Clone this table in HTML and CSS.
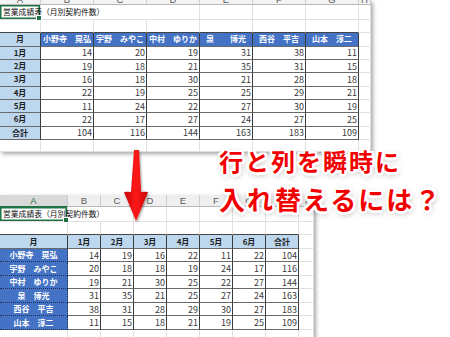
FILE: index.html
```html
<!DOCTYPE html>
<html lang="ja">
<head>
<meta charset="utf-8">
<title>行と列を瞬時に入れ替えるには？</title>
<link rel="stylesheet" href="styles.css">
</head>
<body>
<div class="page">
  <div class="sheet sheet-top">
    <div class="c hd">A</div><div class="c hd">B</div><div class="c hd">C</div><div class="c hd">D</div><div class="c hd">E</div><div class="c hd">F</div><div class="c hd">G</div><div class="c hd">H</div>

    <div class="c sel"><span class="ttl">営業成績表（月別契約件数）</span></div><div class="c sp"></div><div class="c sp"></div><div class="c"></div><div class="c"></div><div class="c"></div><div class="c"></div><div class="c"></div>

    <div class="c ab"></div><div class="c ab"></div><div class="c ab"></div><div class="c ab"></div><div class="c ab"></div><div class="c ab"></div><div class="c ab"></div><div class="c"></div>

    <div class="c t lb">月</div><div class="c t bl">小野寺　晃弘</div><div class="c t bl">宇野　みやこ</div><div class="c t bl">中村　ゆりか</div><div class="c t bl">泉　　博光</div><div class="c t bl">西谷　平吉</div><div class="c t bl">山本　淳二</div><div class="c"></div>

    <div class="c t lb">1月</div><div class="c t n">14</div><div class="c t n">20</div><div class="c t n">19</div><div class="c t n">31</div><div class="c t n">38</div><div class="c t n">11</div><div class="c"></div>
    <div class="c t lb">2月</div><div class="c t n">19</div><div class="c t n">18</div><div class="c t n">21</div><div class="c t n">35</div><div class="c t n">31</div><div class="c t n">15</div><div class="c"></div>
    <div class="c t lb">3月</div><div class="c t n">16</div><div class="c t n">18</div><div class="c t n">30</div><div class="c t n">21</div><div class="c t n">28</div><div class="c t n">18</div><div class="c"></div>
    <div class="c t lb">4月</div><div class="c t n">22</div><div class="c t n">19</div><div class="c t n">25</div><div class="c t n">25</div><div class="c t n">29</div><div class="c t n">21</div><div class="c"></div>
    <div class="c t lb">5月</div><div class="c t n">11</div><div class="c t n">24</div><div class="c t n">22</div><div class="c t n">27</div><div class="c t n">30</div><div class="c t n">19</div><div class="c"></div>
    <div class="c t lb">6月</div><div class="c t n">22</div><div class="c t n">17</div><div class="c t n">27</div><div class="c t n">24</div><div class="c t n">27</div><div class="c t n">25</div><div class="c"></div>
    <div class="c t lb">合計</div><div class="c t n">104</div><div class="c t n">116</div><div class="c t n">144</div><div class="c t n">163</div><div class="c t n">183</div><div class="c t n">109</div><div class="c"></div>

    <div class="c"></div><div class="c"></div><div class="c"></div><div class="c"></div><div class="c"></div><div class="c"></div><div class="c"></div><div class="c"></div>
  </div>

  <div class="sheet sheet-bottom">
    <div class="c hd hd-sel">A</div><div class="c hd">B</div><div class="c hd">C</div><div class="c hd">D</div><div class="c hd">E</div><div class="c hd">F</div><div class="c hd">G</div><div class="c hd">H</div><div class="c hd">I</div>

    <div class="c sel"><span class="ttl">営業成績表（月別契約件数）</span></div><div class="c sp"></div><div class="c"></div><div class="c"></div><div class="c"></div><div class="c"></div><div class="c"></div><div class="c"></div><div class="c"></div>

    <div class="c ab"></div><div class="c ab"></div><div class="c ab"></div><div class="c ab"></div><div class="c ab"></div><div class="c ab"></div><div class="c ab"></div><div class="c ab"></div><div class="c"></div>

    <div class="c t lb">月</div><div class="c t lb">1月</div><div class="c t lb">2月</div><div class="c t lb">3月</div><div class="c t lb">4月</div><div class="c t lb">5月</div><div class="c t lb">6月</div><div class="c t lb">合計</div><div class="c"></div>

    <div class="c t bl bn">小野寺　晃弘</div><div class="c t n">14</div><div class="c t n">19</div><div class="c t n">16</div><div class="c t n">22</div><div class="c t n">11</div><div class="c t n">22</div><div class="c t n">104</div><div class="c"></div>
    <div class="c t bl bn">宇野　みやこ</div><div class="c t n">20</div><div class="c t n">18</div><div class="c t n">18</div><div class="c t n">19</div><div class="c t n">24</div><div class="c t n">17</div><div class="c t n">116</div><div class="c"></div>
    <div class="c t bl bn">中村　ゆりか</div><div class="c t n">19</div><div class="c t n">21</div><div class="c t n">30</div><div class="c t n">25</div><div class="c t n">22</div><div class="c t n">27</div><div class="c t n">144</div><div class="c"></div>
    <div class="c t bl bn">泉　博光</div><div class="c t n">31</div><div class="c t n">35</div><div class="c t n">21</div><div class="c t n">25</div><div class="c t n">27</div><div class="c t n">24</div><div class="c t n">163</div><div class="c"></div>
    <div class="c t bl bn">西谷　平吉</div><div class="c t n">38</div><div class="c t n">31</div><div class="c t n">28</div><div class="c t n">29</div><div class="c t n">30</div><div class="c t n">27</div><div class="c t n">183</div><div class="c"></div>
    <div class="c t bl bn">山本　淳二</div><div class="c t n">11</div><div class="c t n">15</div><div class="c t n">18</div><div class="c t n">21</div><div class="c t n">19</div><div class="c t n">25</div><div class="c t n">109</div><div class="c"></div>

    <div class="c"></div><div class="c"></div><div class="c"></div><div class="c"></div><div class="c"></div><div class="c"></div><div class="c"></div><div class="c"></div><div class="c"></div>
  </div>

  <svg class="arrow" width="40" height="82" viewBox="0 0 40 82" aria-hidden="true">
    <defs>
      <linearGradient id="ag" x1="0" x2="1" y1="0" y2="0">
        <stop offset="0" stop-color="#c40000"/>
        <stop offset="0.5" stop-color="#ff1a1a"/>
        <stop offset="1" stop-color="#c40000"/>
      </linearGradient>
      <filter id="sh" x="-50%" y="-20%" width="200%" height="150%">
        <feDropShadow dx="1" dy="1.5" stdDeviation="1.2" flood-color="#000" flood-opacity="0.4"/>
      </filter>
    </defs>
    <path d="M16 4 L21 4 L23 46 Q26.5 45.5 30 46 L18 75 L6 46 Q9.5 45.5 13 46 Z" fill="url(#ag)" filter="url(#sh)"/>
  </svg>

  <div class="caption">
    <p class="cap1">行と列を瞬時に</p>
    <p class="cap2">入れ替えるには？</p>
  </div>
</div>
</body>
</html>
```

FILE: styles.css
```css
* {
  box-sizing: border-box;
  margin: 0;
  padding: 0;
}

html, body {
  width: 450px;
  height: 337px;
  overflow: hidden;
  background: #fff;
}

body {
  font-family: "Noto Sans CJK JP", "Noto Sans", sans-serif;
  color: #222;
}

.page {
  position: relative;
  width: 450px;
  height: 337px;
  display: flex;
  flex-direction: column;
  align-items: flex-start;
}

.sheet {
  background: #fff;
  display: grid;
  box-shadow: 2px 2px 4px rgba(0, 0, 0, 0.35);
}

.sheet-top {
  grid-template-columns: 41px repeat(6, 53px) 12px;
  grid-template-rows: 5px 15px 13.33px repeat(8, 13.33px) 12px;
}

.sheet-bottom {
  margin-top: 43px;
  grid-template-columns: 68px repeat(7, 33px) 15px;
  grid-template-rows: 12px 15px 13.5px repeat(8, 13.5px);
}

.c {
  display: flex;
  align-items: center;
  white-space: nowrap;
  border-right: 1px solid #e0e0e0;
  border-bottom: 1px solid #e0e0e0;
  font-size: 8px;
  line-height: 1;
  min-width: 0;
}

.hd {
  background: #efefef;
  border-right: 1px solid #cdcdcd;
  border-bottom: 1px solid #b8b8b8;
  justify-content: center;
  font-family: "Liberation Sans", sans-serif;
  font-size: 9.5px;
  color: #5a5a5a;
  overflow: hidden;
}

.sheet-top .hd {
  align-items: flex-end;
  line-height: 9px;
  background: #f3f3f3;
}

.hd-sel {
  background: #d9d9d9;
  color: #2b6e45;
  border-bottom: 1px solid #217346;
}

.sel {
  position: relative;
  z-index: 1;
  box-shadow: inset 0 0 0 1.5px #217346;
  overflow: visible;
}

.sel::after {
  content: "";
  position: absolute;
  right: -2px;
  bottom: -2px;
  width: 4px;
  height: 4px;
  background: #217346;
  border: 1px solid #fff;
}

.ttl {
  padding-left: 3px;
  font-size: 7.8px;
  color: #111;
}

.sp {
  border-right-color: transparent;
}

.ab {
  border-bottom-color: #444;
}

.t {
  border-right: 1px solid #3c3c3c;
  border-bottom: 1px solid #6a6a6a;
}

.lb {
  background: #bdd7ee;
  font-weight: 700;
  justify-content: center;
  color: #1e1e1e;
}

.bl {
  background: #4472c4;
  color: #fff;
  font-weight: 700;
  justify-content: center;
}

.bn {
  border-right: 1px dotted #1c2d52;
  border-bottom: 1px dotted #1c2d52;
}

.n {
  justify-content: flex-end;
  padding-right: 1px;
  font-size: 9px;
  color: #3a3a3a;
}

.arrow {
  position: absolute;
  left: 118px;
  top: 146px;
}

.caption {
  position: absolute;
  left: 219px;
  top: 142px;
  color: #f20000;
  font-weight: 700;
  line-height: 38px;
  letter-spacing: 2px;
  white-space: nowrap;
  text-shadow:
    -2px -2px 0 #fff, 2px -2px 0 #fff, -2px 2px 0 #fff, 2px 2px 0 #fff,
    0 -2.5px 0 #fff, 0 2.5px 0 #fff, -2.5px 0 0 #fff, 2.5px 0 0 #fff,
    1px 2px 6px rgba(0, 0, 0, 0.45);
}

.cap1 {
  font-size: 24px;
}

.cap2 {
  font-size: 26px;
}
```
